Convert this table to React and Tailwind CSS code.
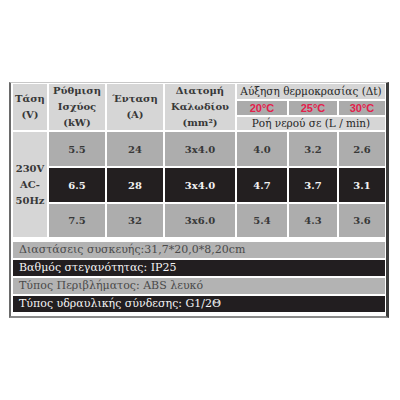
import React from 'react';

const serif = { fontFamily: '"DejaVu Serif", "Liberation Serif", serif' };

const rows = [
  { dark: false, p: '5.5', a: '24', c: '3x4.0', f: ['4.0', '3.2', '2.6'] },
  { dark: true, p: '6.5', a: '28', c: '3x4.0', f: ['4.7', '3.7', '3.1'] },
  { dark: false, p: '7.5', a: '32', c: '3x6.0', f: ['5.4', '4.3', '3.6'] },
];

const info = [
  { dark: false, text: 'Διαστάσεις συσκευής:31,7*20,0*8,20cm' },
  { dark: true, text: 'Βαθμός στεγανότητας: IP25' },
  { dark: false, text: 'Τύπος Περιβλήματος: ABS λευκό' },
  { dark: true, text: 'Τύπος υδραυλικής σύνδεσης: G1/2Θ' },
];

const head = 'bg-[#d6d6d6] text-[#383838] font-bold text-[10px] leading-[16px] flex items-center justify-center text-center row-span-3';

export default function App() {
  return (
    <div className="w-[400px] h-[400px] bg-white" style={serif}>
      <div className="absolute left-[9px] top-[82px] w-[380px] bg-white border-t border-t-[#c8c8c8] border-l-2 border-l-[#6a6a6a] border-r-[3px] border-r-[#3c3c3c] border-b-2 border-b-[#8a8a8a] pt-[1px] pl-[2px] pr-[1px] pb-[4px]">
        <div className="grid grid-cols-[34px_56px_56px_70px_50px_48px_46px] grid-rows-[15px_14px_13px] gap-[2px]">
          <div className={head}>
            <span>Τάση<br />(V)</span>
          </div>
          <div className={head}>
            <span>Ρύθμιση<br />Ισχύος<br />(kW)</span>
          </div>
          <div className={head}>
            <span>Ένταση<br />(A)</span>
          </div>
          <div className={head}>
            <span>Διατομή<br />Καλωδίου<br />(mm²)</span>
          </div>
          <div className="col-span-3 bg-[#d6d6d6] text-[#262626] text-[10.5px] leading-[15px] whitespace-nowrap flex items-center justify-center">
            Αύξηση θερμοκρασίας (Δt)
          </div>
          {['20°C', '25°C', '30°C'].map((t) => (
            <div key={t} className="bg-[#ababab] text-[#e3204b] font-bold text-[11px] leading-[14px] flex items-center justify-center" style={{ fontFamily: '"Liberation Sans", Arial, sans-serif' }}>
              {t}
            </div>
          ))}
          <div className="col-span-3 bg-[#d6d6d6] text-[#262626] text-[10.5px] leading-[13px] whitespace-nowrap flex items-center justify-center">
            Ροή νερού σε (L / min)
          </div>
        </div>

        <div className="mt-[2px] grid grid-cols-[34px_56px_56px_70px_50px_48px_46px] grid-rows-[34px_34px_33px] gap-[2px]">
          <div className="row-span-3 bg-[#d6d6d6] text-[#383838] font-bold text-[10px] leading-[16px] flex items-center justify-center text-center">
            <span>230V<br />AC-<br />50Hz</span>
          </div>
          {rows.map((r) =>
            [r.p, r.a, r.c, ...r.f].map((v, i) => (
              <div
                key={r.p + i}
                className={`${r.dark ? 'bg-[#231f20] text-[#f2f2f2]' : 'bg-[#adadad] text-[#383838]'} font-bold text-[10px] flex items-center justify-center`}
              >
                {v}
              </div>
            ))
          )}
        </div>

        <div className="mt-[5px] flex flex-col gap-[2px]">
          {info.map((r) => (
            <div
              key={r.text}
              className={`${r.dark ? 'bg-[#221e20] text-[#f4f4f4]' : 'bg-[#b3b3b3] text-[#4a4a4a]'} h-[16px] pl-[6px] text-[11px] leading-[16px] whitespace-nowrap`}
            >
              {r.text}
            </div>
          ))}
        </div>
      </div>
    </div>
  );
}
